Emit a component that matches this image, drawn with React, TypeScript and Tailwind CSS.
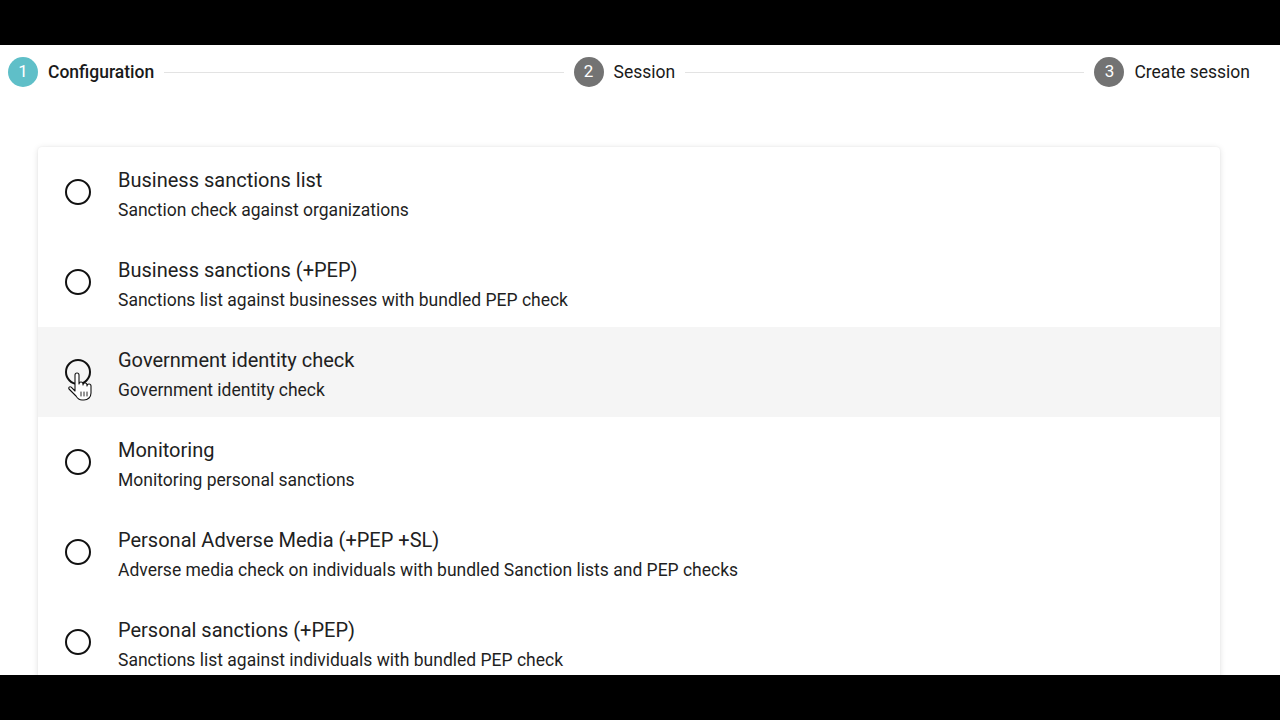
import React from 'react'

const steps = [
  { n: 1, label: 'Configuration', active: true },
  { n: 2, label: 'Session', active: false },
  { n: 3, label: 'Create session', active: false },
]

const options = [
  { title: 'Business sanctions list', desc: 'Sanction check against organizations' },
  { title: 'Business sanctions (+PEP)', desc: 'Sanctions list against businesses with bundled PEP check' },
  { title: 'Government identity check', desc: 'Government identity check', hover: true },
  { title: 'Monitoring', desc: 'Monitoring personal sanctions' },
  { title: 'Personal Adverse Media (+PEP +SL)', desc: 'Adverse media check on individuals with bundled Sanction lists and PEP checks' },
  { title: 'Personal sanctions (+PEP)', desc: 'Sanctions list against individuals with bundled PEP check' },
]

function HandCursor() {
  return (
    <svg className="absolute left-[2px] top-[13px]" width="26" height="30" viewBox="0 0 26 30">
      <path
        d="M8 3a2 2 0 0 1 4 0V12a2 2 0 0 1 4 0V13a2 2 0 0 1 4 0V14a2 2 0 0 1 4 0V21c0 4-3 7-7 7h-2c-3 0-4.5-1.5-6-4L2 17c-1-1.5.8-3 2.2-1.8L8 19Z"
        fill="#fff"
        stroke="#111"
        strokeWidth="1.1"
        strokeLinejoin="round"
      />
      <path d="M14 20v4M17 20v4M20 20v4" stroke="#111" strokeWidth="0.9" strokeLinecap="round" />
    </svg>
  )
}

export default function App() {
  return (
    <div className="w-[1280px] h-[720px] bg-black flex flex-col font-['Roboto','Liberation_Sans',sans-serif]">
      <div className="h-[45px] shrink-0 bg-black" />
      <div className="h-[630px] shrink-0 bg-white overflow-hidden">
        <div className="flex items-center h-[54px] pl-[8px] pr-[30px]">
          {steps.map((s, i) => (
            <React.Fragment key={s.n}>
              <div className="flex items-center shrink-0">
                <div
                  className={`w-[30px] h-[30px] rounded-full flex items-center justify-center text-white text-[17px] ${
                    s.active ? 'bg-[#5fbfc8]' : 'bg-[#737373]'
                  }`}
                >
                  {s.n}
                </div>
                <span className={`ml-[10px] pt-px text-[17.5px] text-[#1a1a1a] ${s.active ? 'font-medium' : ''}`}>{s.label}</span>
              </div>
              {i < steps.length - 1 && <div className="flex-1 h-px bg-[#e3e3e3] mx-[10px]" />}
            </React.Fragment>
          ))}
        </div>

        <div className="mx-[38px] mt-[48px] w-[1182px] bg-white rounded-[4px] shadow-[0_1px_6px_rgba(0,0,0,0.12),0_0_2px_rgba(0,0,0,0.06)]">
          {options.map((o) => (
            <div
              key={o.title}
              className={`flex items-center h-[90px] pl-[27px] ${o.hover ? 'bg-[#f5f5f5]' : ''}`}
            >
              <div className="relative w-[26px] h-[26px] shrink-0">
                <div className="w-[26px] h-[26px] rounded-full border-2 border-[#111]" />
                {o.hover && <HandCursor />}
              </div>
              <div className="ml-[27px] pt-[5px] flex flex-col">
                <div className="text-[20px] leading-[24px] text-[#212121]">{o.title}</div>
                <div className="mt-[6px] text-[17.5px] leading-[24px] text-[#1f1f1f]">{o.desc}</div>
              </div>
            </div>
          ))}
        </div>
      </div>
      <div className="h-[45px] shrink-0 bg-black" />
    </div>
  )
}
